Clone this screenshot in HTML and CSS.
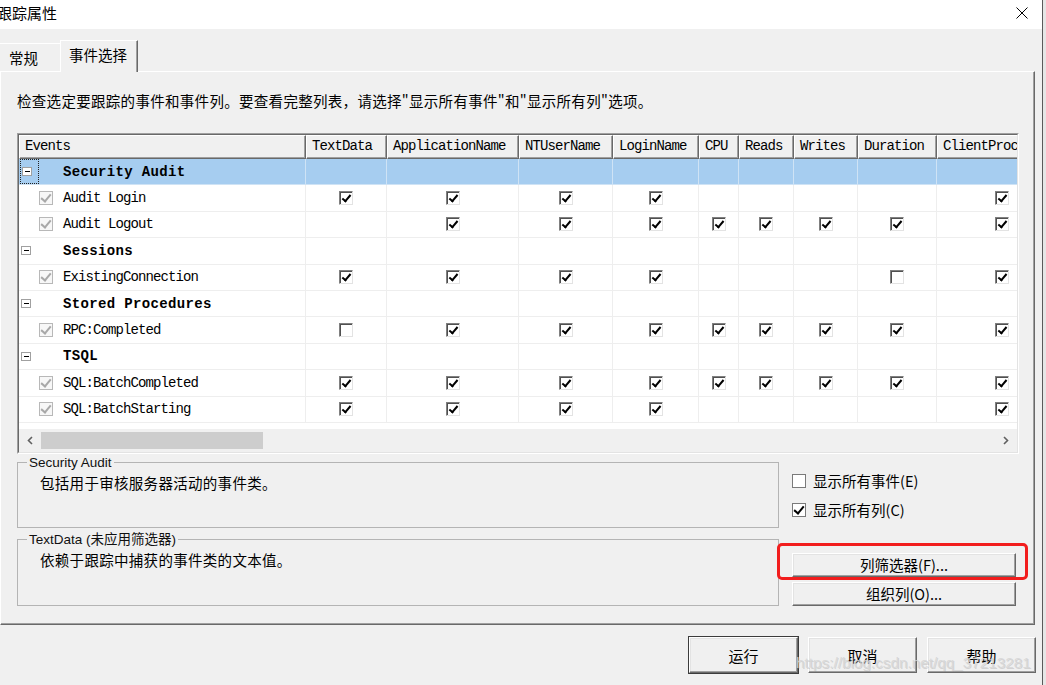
FILE: index.html
```html
<!DOCTYPE html>
<html lang="zh-CN">
<head>
<meta charset="utf-8">
<title>跟踪属性</title>
<link rel="stylesheet" href="styles.css">
</head>
<body>
<div class="screen">
  <div class="window">
    <div class="titlebar">
      <span class="title">跟踪属性</span>
      <svg class="close" width="12" height="12" viewBox="0 0 12 12"><path d="M0.5 0.5L11.5 11.5M11.5 0.5L0.5 11.5" stroke="#000" stroke-width="1" fill="none"/></svg>
    </div>
    <div class="tabs">
      <div class="tab">常规</div>
      <div class="tab active">事件选择</div>
    </div>
    <div class="panel">
      <p class="intro">检查选定要跟踪的事件和事件列。要查看完整列表，请选择"显示所有事件"和"显示所有列"选项。</p>
      <div class="gridbox"><div class="gridinner">
        <div class="grid">
          <div class="row head">
            <div class="hc">Events</div><div class="hc">TextData</div><div class="hc">ApplicationName</div><div class="hc">NTUserName</div><div class="hc">LoginName</div><div class="hc">CPU</div><div class="hc">Reads</div><div class="hc">Writes</div><div class="hc">Duration</div><div class="hc">ClientProcessID</div>
          </div>
          <div class="row sel">
            <div class="c first"><span class="lead"><span class="focus"><span class="minus"></span></span></span><span class="gname">Security Audit</span></div><div class="c"></div><div class="c"></div><div class="c"></div><div class="c"></div><div class="c"></div><div class="c"></div><div class="c"></div><div class="c"></div><div class="c"></div>
          </div>
          <div class="row">
            <div class="c first"><span class="lead"><span class="ecb"></span></span><span class="ename">Audit Login</span></div><div class="c"><span class="cb on"></span></div><div class="c"><span class="cb on"></span></div><div class="c"><span class="cb on"></span></div><div class="c"><span class="cb on"></span></div><div class="c"></div><div class="c"></div><div class="c"></div><div class="c"></div><div class="c"><span class="cb on"></span></div>
          </div>
          <div class="row">
            <div class="c first"><span class="lead"><span class="ecb"></span></span><span class="ename">Audit Logout</span></div><div class="c"></div><div class="c"><span class="cb on"></span></div><div class="c"><span class="cb on"></span></div><div class="c"><span class="cb on"></span></div><div class="c"><span class="cb on"></span></div><div class="c"><span class="cb on"></span></div><div class="c"><span class="cb on"></span></div><div class="c"><span class="cb on"></span></div><div class="c"><span class="cb on"></span></div>
          </div>
          <div class="row">
            <div class="c first"><span class="lead"><span class="minus"></span></span><span class="gname">Sessions</span></div><div class="c"></div><div class="c"></div><div class="c"></div><div class="c"></div><div class="c"></div><div class="c"></div><div class="c"></div><div class="c"></div><div class="c"></div>
          </div>
          <div class="row">
            <div class="c first"><span class="lead"><span class="ecb"></span></span><span class="ename">ExistingConnection</span></div><div class="c"><span class="cb on"></span></div><div class="c"><span class="cb on"></span></div><div class="c"><span class="cb on"></span></div><div class="c"><span class="cb on"></span></div><div class="c"></div><div class="c"></div><div class="c"></div><div class="c"><span class="cb"></span></div><div class="c"><span class="cb on"></span></div>
          </div>
          <div class="row">
            <div class="c first"><span class="lead"><span class="minus"></span></span><span class="gname">Stored Procedures</span></div><div class="c"></div><div class="c"></div><div class="c"></div><div class="c"></div><div class="c"></div><div class="c"></div><div class="c"></div><div class="c"></div><div class="c"></div>
          </div>
          <div class="row">
            <div class="c first"><span class="lead"><span class="ecb"></span></span><span class="ename">RPC:Completed</span></div><div class="c"><span class="cb"></span></div><div class="c"><span class="cb on"></span></div><div class="c"><span class="cb on"></span></div><div class="c"><span class="cb on"></span></div><div class="c"><span class="cb on"></span></div><div class="c"><span class="cb on"></span></div><div class="c"><span class="cb on"></span></div><div class="c"><span class="cb on"></span></div><div class="c"><span class="cb on"></span></div>
          </div>
          <div class="row">
            <div class="c first"><span class="lead"><span class="minus"></span></span><span class="gname">TSQL</span></div><div class="c"></div><div class="c"></div><div class="c"></div><div class="c"></div><div class="c"></div><div class="c"></div><div class="c"></div><div class="c"></div><div class="c"></div>
          </div>
          <div class="row">
            <div class="c first"><span class="lead"><span class="ecb"></span></span><span class="ename">SQL:BatchCompleted</span></div><div class="c"><span class="cb on"></span></div><div class="c"><span class="cb on"></span></div><div class="c"><span class="cb on"></span></div><div class="c"><span class="cb on"></span></div><div class="c"><span class="cb on"></span></div><div class="c"><span class="cb on"></span></div><div class="c"><span class="cb on"></span></div><div class="c"><span class="cb on"></span></div><div class="c"><span class="cb on"></span></div>
          </div>
          <div class="row">
            <div class="c first"><span class="lead"><span class="ecb"></span></span><span class="ename">SQL:BatchStarting</span></div><div class="c"><span class="cb on"></span></div><div class="c"><span class="cb on"></span></div><div class="c"><span class="cb on"></span></div><div class="c"><span class="cb on"></span></div><div class="c"></div><div class="c"></div><div class="c"></div><div class="c"></div><div class="c"><span class="cb on"></span></div>
          </div>
        </div>
        <div class="gridgap"></div>
        <div class="hscroll">
          <div class="arrow"><svg width="6" height="9" viewBox="0 0 6 9"><polyline points="5,1 1.5,4.5 5,8" fill="none" stroke="#606060" stroke-width="1.6"/></svg></div>
          <div class="thumb"></div>
          <div class="track"></div>
          <div class="arrow"><svg width="6" height="9" viewBox="0 0 6 9"><polyline points="1,1 4.5,4.5 1,8" fill="none" stroke="#606060" stroke-width="1.6"/></svg></div>
        </div>
      </div></div>
      <div class="lower">
        <fieldset class="group">
          <legend>Security Audit</legend>
          <div class="gdesc">包括用于审核服务器活动的事件类。</div>
        </fieldset>
        <div class="opts">
          <div class="opt"><span class="box"></span><span>显示所有事件(E)</span></div>
          <div class="opt"><span class="box on"></span><span>显示所有列(C)</span></div>
        </div>
        <fieldset class="group">
          <legend>TextData (未应用筛选器)</legend>
          <div class="gdesc">依赖于跟踪中捕获的事件类的文本值。</div>
        </fieldset>
        <div class="btns">
          <div class="hl"><button class="btn">列筛选器(F)...</button></div>
          <button class="btn">组织列(O)...</button>
        </div>
      </div>
    </div>
    <div class="footer">
      <button class="fbtn default">运行</button>
      <button class="fbtn">取消</button>
      <button class="fbtn">帮助</button>
    </div>
  </div>
  <div class="desk"></div>
  <div class="watermark">https://blog.csdn.net/qq_37213281</div>
</div>
</body>
</html>
```

FILE: styles.css
```css
* { box-sizing: border-box; }
html, body { margin: 0; padding: 0; }
body {
  width: 1046px;
  height: 685px;
  overflow: hidden;
  background: #e9e9e9;
  font-family: "Noto Sans CJK SC", sans-serif;
  font-size: 14.5px;
  color: #000;
}
.screen { display: flex; height: 685px; position: relative; }
.window {
  width: 1043px;
  height: 685px;
  background: #f0f0f0;
  border-right: 1px solid #5a5a5a;
  display: flex;
  flex-direction: column;
  flex: none;
}
.desk { flex: 1; background: #e6e6e6; }

.titlebar {
  height: 29px;
  background: #fff;
  display: flex;
  align-items: center;
  justify-content: space-between;
  padding-right: 14px;
  flex: none;
}
.title { margin-left: -3px; font-size: 15px; line-height: 20px; margin-top: -3px; }
.close { margin-top: -3px; }

.tabs {
  height: 42px;
  display: flex;
  align-items: flex-end;
  position: relative;
  z-index: 1;
  flex: none;
}
.tab {
  width: 60px;
  height: 28px;
  padding-left: 9px;
  border-top: 1px solid #fff;
  line-height: 27px;
  font-size: 14.5px;
  background: #f0f0f0;
}
.tab.active {
  width: 78px;
  height: 32px;
  padding-left: 8px;
  border-left: 1px solid #fff;
  border-right: 1px solid #696969;
  box-shadow: inset -1px 0 0 #a0a0a0;
  margin-bottom: -1px;
  line-height: 28px;
}

.panel {
  width: 1035px;
  height: 554px;
  flex: none;
  border-top: 1px solid #fff;
  border-left: 1px solid #fff;
  border-right: 1px solid #696969;
  border-bottom: 1px solid #696969;
  box-shadow: inset -1px -1px 0 #a0a0a0;
  padding: 19px 0 0 16px;
}
.intro { margin: 0; line-height: 20px; height: 20px; white-space: nowrap; letter-spacing: 0.3px; }

.gridbox {
  margin-top: 22px;
  width: 1002px;
  border: 1px solid;
  border-color: #a0a0a0 #ffffff #ffffff #a0a0a0;
}
.gridinner {
  border: 1px solid;
  border-color: #696969 #e3e3e3 #e3e3e3 #696969;
  background: #fff;
}
.grid { width: 998px; overflow: hidden; }
.row {
  display: grid;
  grid-template-columns: 287px 81px 132px 94px 86px 40px 55px 64px 79px 130px;
  width: max-content;
  height: 26.4px;
}
.row.head { height: 24px; }
.hc {
  background: #f0f0f0;
  border-top: 1px solid #fff;
  border-left: 1px solid #fff;
  border-right: 1px solid #696969;
  border-bottom: 1px solid #696969;
  box-shadow: inset -1px -1px 0 #a0a0a0;
  font-family: "Liberation Mono", "Courier New", Cousine, "Nimbus Mono PS", FreeMono, monospace;
  font-size: 14px;
  letter-spacing: -0.9px;
  line-height: 21px;
  padding-left: 5px;
  white-space: nowrap;
  overflow: hidden;
}
.c {
  border-right: 1px solid #eeeeee;
  border-bottom: 1px solid #eeeeee;
  display: flex;
  align-items: center;
  justify-content: center;
}
.row.sel .c { background: #a6cdf0; border-color: #cfe3f5; }
.c.first { justify-content: flex-start; }
.lead { width: 44px; flex: none; display: flex; align-items: center; height: 100%; }
.focus {
  width: 19px;
  height: 100%;
  border: 1px dotted #222;
  display: flex;
  align-items: center;
  padding-left: 1px;
  margin-left: 1px;
}
.minus {
  width: 10px;
  height: 9px;
  border: 1px solid #a0a0a0;
  background: #fff;
  margin-left: 2px;
  position: relative;
}
.focus .minus { margin-left: 0; }
.minus::after {
  content: "";
  position: absolute;
  left: 2px;
  top: 3px;
  width: 5px;
  height: 1px;
  background: #000;
}
.ename, .gname {
  font-family: "Liberation Mono", "Courier New", Cousine, "Nimbus Mono PS", FreeMono, monospace;
  font-size: 14px;
  letter-spacing: -0.9px;
  white-space: nowrap;
}
.gname { font-weight: bold; letter-spacing: 0.35px; }

.ecb {
  width: 14px;
  height: 14px;
  margin-left: 20px;
  border: 1px solid #b8b8b8;
  background: #f7f7f7;
  position: relative;
}
.ecb::after {
  content: "";
  position: absolute;
  left: 3px;
  top: 0px;
  width: 4px;
  height: 8px;
  border-right: 2px solid #a8a8a8;
  border-bottom: 2px solid #a8a8a8;
  transform: rotate(40deg);
}
.cb {
  width: 14px;
  height: 14px;
  background: #fff;
  border: 1px solid;
  border-color: #808080 #e3e3e3 #e3e3e3 #808080;
  box-shadow: inset 1px 1px 0 #505050;
  position: relative;
}
.cb.on::after {
  content: "";
  position: absolute;
  left: 4px;
  top: 1px;
  width: 3px;
  height: 7px;
  border-right: 2px solid #000;
  border-bottom: 2px solid #000;
  transform: rotate(40deg);
}

.gridgap { height: 6px; }
.hscroll {
  height: 23px;
  background: #f0f0f0;
  display: flex;
  align-items: center;
}
.arrow { width: 22px; height: 100%; display: flex; align-items: center; justify-content: center; flex: none; }
.thumb { width: 222px; height: 17px; background: #cdcdcd; flex: none; }
.track { flex: 1; }

.lower {
  display: grid;
  grid-template-columns: 762px 224px;
  grid-template-rows: 73px 74px;
  column-gap: 13px;
  row-gap: 4px;
  margin-top: 1px;
}
.group {
  margin: 0;
  padding: 0 0 0 9px;
  border: 1px solid #b4b4b4;
  min-width: 0;
}
.group legend {
  font-family: "Liberation Sans", "Noto Sans CJK SC", sans-serif;
  font-size: 13.5px;
  line-height: 16px;
  padding: 0 2px;
  color: #111;
}
.gdesc { padding-left: 13px; margin-top: 2px; line-height: 20px; font-size: 14.5px; letter-spacing: 0.3px; }

.opts { padding-top: 16px; display: flex; flex-direction: column; gap: 9px; }
.opt { display: flex; align-items: center; height: 20px; gap: 7px; font-size: 14.5px; }
.box {
  width: 14px;
  height: 14px;
  border: 1px solid #7a7a7a;
  background: #fff;
  position: relative;
  flex: none;
}
.box.on::after {
  content: "";
  position: absolute;
  left: 3px;
  top: 0px;
  width: 4px;
  height: 8px;
  border-right: 2px solid #000;
  border-bottom: 2px solid #000;
  transform: rotate(40deg);
}

.btns { padding-top: 21px; display: flex; flex-direction: column; gap: 5px; }
.btn, .fbtn {
  font-family: "Noto Sans CJK SC", sans-serif;
  font-size: 14.5px;
  color: #000;
  background: #f0f0f0;
  border: 1px solid;
  border-color: #ffffff #696969 #696969 #ffffff;
  box-shadow: inset -1px -1px 0 #a0a0a0, inset 1px 1px 0 #e3e3e3;
  padding: 0;
  margin: 0;
}
.btn { width: 224px; height: 24px; line-height: 20px; display: block; }
.hl { position: relative; }
.hl::after {
  content: "";
  position: absolute;
  left: -15px;
  right: -12px;
  top: -10px;
  bottom: -3px;
  border: 3px solid #f21d1d;
  border-radius: 5px;
}

.footer {
  display: flex;
  justify-content: flex-end;
  gap: 10px;
  padding: 12px 6px 0 0;
}
.fbtn { width: 109px; height: 36px; font-size: 15px; }
.fbtn.default { outline: 1px solid #3c3c3c; outline-offset: 0; }

.watermark {
  position: absolute;
  left: 796px;
  top: 653px;
  font-family: "Liberation Sans", sans-serif;
  font-size: 15.3px;
  line-height: 20px;
  color: rgba(215, 215, 215, 0.9);
  text-shadow: 1px 1px 0 rgba(140, 140, 140, 0.3);
  white-space: nowrap;
}
```
